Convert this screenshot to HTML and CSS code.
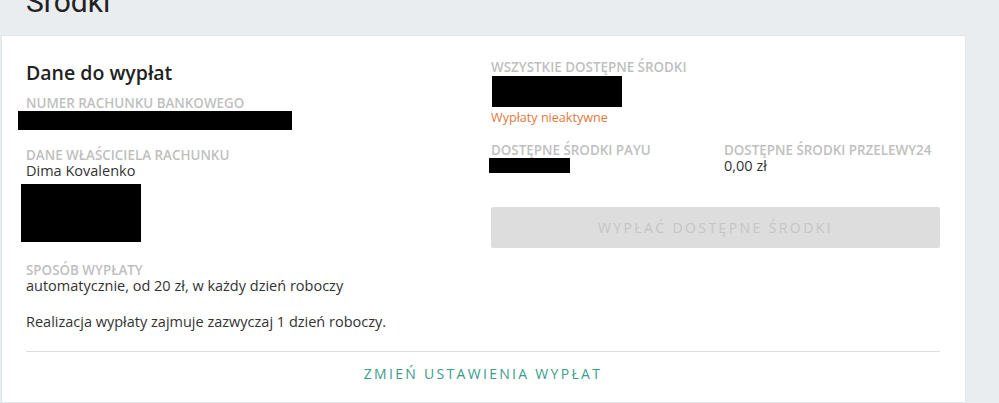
FILE: index.html
```html
<html>
  <head>
    <title>Środki</title>
    <link rel="stylesheet" href="styles.css">
  </head>
  <body>
    <main class="page">
      <h1 class="page-title">Środki</h1>

      <section class="card">
        <div class="columns">
          <div class="column">
            <h2 class="card-title">Dane do wypłat</h2>

            <div class="label">Numer rachunku bankowego</div>
            <div class="redacted redacted-account"></div>

            <div class="label label-spaced">Dane właściciela rachunku</div>
            <div class="value">Dima Kovalenko</div>
            <div class="redacted redacted-address"></div>

            <div class="label label-method">Sposób wypłaty</div>
            <div class="value">automatycznie, od 20 zł, w każdy dzień roboczy</div>
            <p class="value note">Realizacja wypłaty zajmuje zazwyczaj 1 dzień roboczy.</p>
          </div>

          <div class="column">
            <div class="label">Wszystkie dostępne środki</div>
            <div class="redacted redacted-total"></div>
            <div class="status">Wypłaty nieaktywne</div>

            <div class="providers">
              <div>
                <div class="label">Dostępne środki PayU</div>
                <div class="redacted redacted-payu"></div>
              </div>
              <div>
                <div class="label">Dostępne środki Przelewy24</div>
                <div class="value">0,00 zł</div>
              </div>
            </div>

            <button class="payout-button" disabled>Wypłać dostępne środki</button>
          </div>
        </div>

        <div class="card-footer">
          <a class="settings-link" href="#">Zmień ustawienia wypłat</a>
        </div>
      </section>
    </main>
  </body>
</html>
```

FILE: styles.css
```css
:root {
  --fonts: "Open Sans", "Noto Sans", sans-serif;
  --background: #e9edf0;
  --card-background: #ffffff;
  --text: #333333;
  --label: #bfbfbf;
  --warning: #e5773c;
  --accent: #3a9d8b;
  --divider: #dddddd;
}

body,
html {
  margin: 0;
  padding: 0;
  font-family: var(--fonts);
  background: var(--background);
  color: var(--text);
}

.page {
  padding: 0 34px 2px 2px;
}

.page-title {
  margin: -16px 0 16px 24px;
  font-family: Roboto, "Liberation Sans", sans-serif;
  font-size: 30px;
  line-height: 36px;
  font-weight: 400;
  color: #222222;
}

.card {
  background: var(--card-background);
  box-shadow: 0 0 0 1px #e3e6e9;
  padding: 24px 25px 20px 24px;
}

.columns {
  display: grid;
  grid-template-columns: 1fr 449px;
  column-gap: 24px;
}

.card-title {
  margin: 0 0 10px;
  font-size: 19.5px;
  line-height: 26px;
  font-weight: 600;
  color: #222222;
}

.label {
  font-size: 13.4px;
  line-height: 15px;
  font-weight: 600;
  text-transform: uppercase;
  color: var(--label);
}

.label-spaced {
  margin-top: 18px;
}

.label-method {
  margin-top: 21px;
}

.value {
  font-size: 14.5px;
  line-height: 16px;
}

.note {
  margin: 20px 0 0;
}

.redacted {
  background: #000000;
}

.redacted-account {
  width: 274px;
  height: 19px;
  margin-left: -8px;
}

.redacted-address {
  width: 120px;
  height: 58px;
  margin: 5px 0 0 -5px;
}

.redacted-total {
  width: 130px;
  height: 31px;
  margin: 1px 0 0 1px;
}

.redacted-payu {
  width: 81px;
  height: 15px;
  margin-left: -2px;
}

.status {
  margin-top: 3px;
  font-size: 12.6px;
  line-height: 16px;
  color: var(--warning);
}

.providers {
  display: grid;
  grid-template-columns: 233px 1fr;
  margin-top: 17px;
}

.payout-button {
  display: block;
  width: 100%;
  height: 41px;
  margin-top: 33px;
  border: none;
  border-radius: 2px;
  background: #dddddd;
  color: #c5c5c5;
  font-family: var(--fonts);
  font-size: 14px;
  letter-spacing: 2.4px;
  text-transform: uppercase;
}

.card-footer {
  margin-top: 21px;
  padding-top: 14px;
  border-top: 1px solid var(--divider);
  text-align: center;
}

.settings-link {
  display: inline-block;
  font-size: 14px;
  line-height: 16px;
  letter-spacing: 2.3px;
  text-transform: uppercase;
  text-decoration: none;
  color: var(--accent);
}
```
